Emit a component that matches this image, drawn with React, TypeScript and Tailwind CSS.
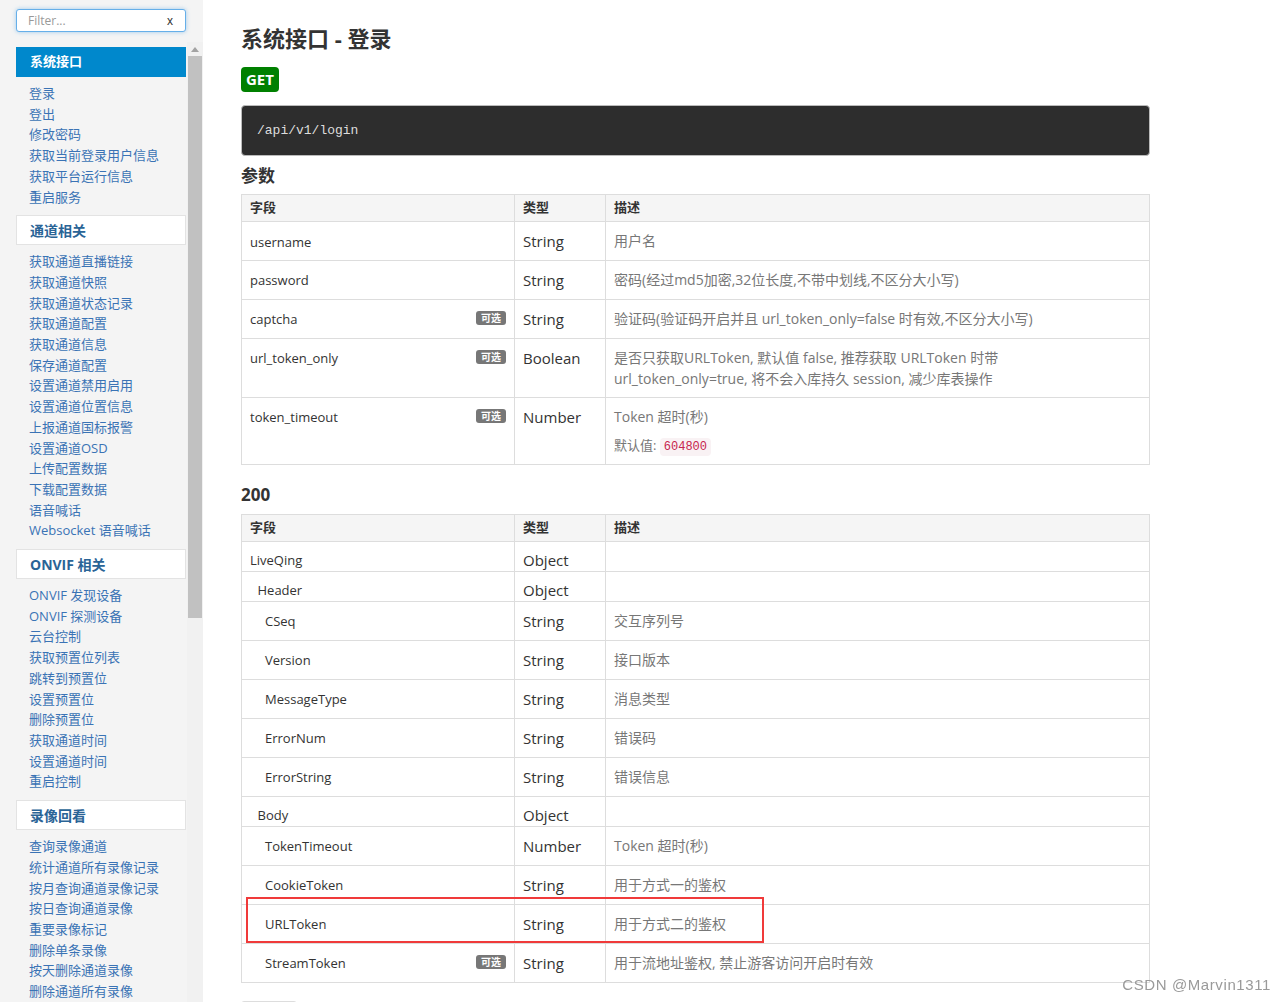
import React from "react"

const font = "font-['Open_Sans','Noto_Sans_CJK_SC',sans-serif]"

const nav = [
  { title: "系统接口", active: true, items: ["登录", "登出", "修改密码", "获取当前登录用户信息", "获取平台运行信息", "重启服务"] },
  {
    title: "通道相关",
    items: [
      "获取通道直播链接", "获取通道快照", "获取通道状态记录", "获取通道配置", "获取通道信息", "保存通道配置",
      "设置通道禁用启用", "设置通道位置信息", "上报通道国标报警", "设置通道OSD", "上传配置数据", "下载配置数据",
      "语音喊话", "Websocket 语音喊话",
    ],
  },
  {
    title: "ONVIF 相关",
    items: [
      "ONVIF 发现设备", "ONVIF 探测设备", "云台控制", "获取预置位列表", "跳转到预置位", "设置预置位", "删除预置位",
      "获取通道时间", "设置通道时间", "重启控制",
    ],
  },
  {
    title: "录像回看",
    items: ["查询录像通道", "统计通道所有录像记录", "按月查询通道录像记录", "按日查询通道录像", "重要录像标记", "删除单条录像", "按天删除通道录像", "删除通道所有录像"],
  },
]

type Row = { name: string; type: string; desc?: string; indent?: number; optional?: boolean; short?: boolean }

const resp: Row[] = [
  { name: "LiveQing", type: "Object", short: true },
  { name: "Header", type: "Object", indent: 1, short: true },
  { name: "CSeq", type: "String", indent: 2, desc: "交互序列号" },
  { name: "Version", type: "String", indent: 2, desc: "接口版本" },
  { name: "MessageType", type: "String", indent: 2, desc: "消息类型" },
  { name: "ErrorNum", type: "String", indent: 2, desc: "错误码" },
  { name: "ErrorString", type: "String", indent: 2, desc: "错误信息" },
  { name: "Body", type: "Object", indent: 1, short: true },
  { name: "TokenTimeout", type: "Number", indent: 2, desc: "Token 超时(秒)" },
  { name: "CookieToken", type: "String", indent: 2, desc: "用于方式一的鉴权" },
  { name: "URLToken", type: "String", indent: 2, desc: "用于方式二的鉴权" },
  { name: "StreamToken", type: "String", indent: 2, desc: "用于流地址鉴权, 禁止游客访问开启时有效", optional: true },
]

function Optional() {
  return (
    <span className="mt-[3px] h-[14px] rounded-[3px] bg-[#777] px-[5px] text-[10px] font-bold leading-[14px] text-white">可选</span>
  )
}

function Head() {
  return (
    <thead>
      <tr className="bg-[#f5f5f5] text-left text-[13px] font-bold text-[#333]">
        <th className="h-[27px] border border-[#ddd] px-[8px] py-0">字段</th>
        <th className="border border-[#ddd] px-[8px] py-0">类型</th>
        <th className="border border-[#ddd] px-[8px] py-0">描述</th>
      </tr>
    </thead>
  )
}

function Cols() {
  return (
    <colgroup>
      <col className="w-[273px]" />
      <col className="w-[91px]" />
      <col />
    </colgroup>
  )
}

export default function App() {
  return (
    <div className={`flex h-screen overflow-hidden bg-white text-[#333] ${font}`}>
      <aside className="flex w-[203px] shrink-0 flex-col bg-[#f4f4f4]">
        <div className="h-[42px] pt-[9px]">
          <div className="ml-[16px] flex h-[23px] w-[170px] items-center justify-between rounded-[3px] border border-[#66afe9] bg-white pl-[11px] pr-[12px] text-[12px] shadow-[0_0_4px_rgba(102,175,233,0.6)]">
            <span className="text-[#999]">Filter...</span>
            <span className="font-['Liberation_Sans',sans-serif] text-[12px] text-[#333]">x</span>
          </div>
        </div>
        <div className="flex min-h-0 flex-1">
          <div className="min-w-0 flex-1 pl-[16px] pr-[1px] pt-[5px]">
            {nav.map((s) => (
              <div key={s.title} className="mb-[8px]">
                <div
                  className={
                    s.active
                      ? "flex h-[30px] items-center border border-[#0088cc] bg-[#0088cc] pl-[13px] text-[13px] font-bold text-white"
                      : "flex h-[30px] items-center border border-[#e3e3e3] bg-white pl-[13px] text-[14px] font-bold text-[#2a6496]"
                  }
                >
                  {s.title}
                </div>
                <ul className="mt-[6px] pl-[13px]">
                  {s.items.map((it) => (
                    <li key={it} className="whitespace-nowrap text-[13px] leading-[20.7px] text-[#3a73b5]">
                      {it}
                    </li>
                  ))}
                </ul>
              </div>
            ))}
          </div>
          <div className="flex w-[16px] shrink-0 flex-col bg-[#f1f1f1]">
            <div className="flex h-[14px] items-center justify-center">
              <svg width="8" height="5" viewBox="0 0 8 5">
                <path d="M0 5 L4 0 L8 5 Z" fill="#a3a3a3" />
              </svg>
            </div>
            <div className="mx-[1px] h-[562px] bg-[#c1c1c1]" />
          </div>
        </div>
      </aside>

      <main className="min-w-0 flex-1 overflow-hidden pl-[38px]">
        <div className="w-[909px]">
          <h1 className="mt-[21px] h-[34px] text-[22px] font-bold leading-[34px] text-[#333]">系统接口 - 登录</h1>
          <div className="mt-[12px] inline-flex h-[25px] items-center rounded-[4px] bg-[#008000] px-[5px] text-[15px] font-bold text-white">
            GET
          </div>
          <div className="mt-[13px] flex h-[51px] items-center rounded-[4px] border border-[#bbb] bg-[#2d2d2d] pl-[15px] font-['Liberation_Mono',monospace] text-[13px] text-[#ddd]">
            /api/v1/login
          </div>
          <h3 className="mt-[8px] text-[17px] font-semibold leading-[24px]">参数</h3>

          <table className="mt-[6px] w-full table-fixed border-collapse">
            <Cols />
            <Head />
            <tbody className="align-top">
              <tr>
                <td className="border border-[#ddd] px-[8px] pb-[7px] pt-[9px] text-[13px] leading-[22px]">username</td>
                <td className="border border-[#ddd] px-[8px] pt-[8px] text-[15px] leading-[22px]">String</td>
                <td className="border border-[#ddd] px-[8px] pt-[8px] text-[14px] leading-[22px] text-[#777]">用户名</td>
              </tr>
              <tr>
                <td className="border border-[#ddd] px-[8px] pb-[8px] pt-[8px] text-[13px] leading-[22px]">password</td>
                <td className="border border-[#ddd] px-[8px] pt-[8px] text-[15px] leading-[22px]">String</td>
                <td className="border border-[#ddd] px-[8px] pt-[8px] text-[14px] leading-[22px] text-[#777]">
                  密码(经过md5加密,32位长度,不带中划线,不区分大小写)
                </td>
              </tr>
              <tr>
                <td className="border border-[#ddd] px-[8px] py-[8px] text-[13px] leading-[22px]">
                  <div className="flex items-start justify-between">
                    <span>captcha</span>
                    <Optional />
                  </div>
                </td>
                <td className="border border-[#ddd] px-[8px] pt-[8px] text-[15px] leading-[22px]">String</td>
                <td className="border border-[#ddd] px-[8px] pt-[8px] text-[14px] leading-[22px] text-[#777]">
                  验证码(验证码开启并且 url_token_only=false 时有效,不区分大小写)
                </td>
              </tr>
              <tr>
                <td className="border border-[#ddd] px-[8px] py-[8px] text-[13px] leading-[22px]">
                  <div className="flex items-start justify-between">
                    <span>url_token_only</span>
                    <Optional />
                  </div>
                </td>
                <td className="border border-[#ddd] px-[8px] pt-[8px] text-[15px] leading-[22px]">Boolean</td>
                <td className="border border-[#ddd] px-[8px] py-[8px] text-[14px] leading-[21px] text-[#777]">
                  是否只获取URLToken, 默认值 false, 推荐获取 URLToken 时带
                  <br />
                  url_token_only=true, 将不会入库持久 session, 减少库表操作
                </td>
              </tr>
              <tr>
                <td className="border border-[#ddd] px-[8px] py-[8px] text-[13px] leading-[22px]">
                  <div className="flex items-start justify-between">
                    <span>token_timeout</span>
                    <Optional />
                  </div>
                </td>
                <td className="border border-[#ddd] px-[8px] pt-[8px] text-[15px] leading-[22px]">Number</td>
                <td className="border border-[#ddd] px-[8px] py-[8px] text-[14px] leading-[22px] text-[#777]">
                  <p>Token 超时(秒)</p>
                  <p className="mt-[6px] h-[22px] text-[13px]">
                    默认值:{" "}
                    <code className="rounded-[4px] bg-[#f9f2f4] px-[4px] py-[2px] font-['Liberation_Mono',monospace] text-[12px] text-[#c7254e]">
                      604800
                    </code>
                  </p>
                </td>
              </tr>
            </tbody>
          </table>

          <h3 className="mt-[18px] text-[17px] font-bold leading-[24px]">200</h3>

          <div className="relative mt-[7px]">
            <table className="w-full table-fixed border-collapse">
              <Cols />
              <Head />
              <tbody className="align-top">
                {resp.map((r) => (
                  <tr key={r.name}>
                    <td
                      className={
                        (r.short ? "pb-0 pt-[7px] leading-[22px] " : "py-[8px] leading-[22px] ") +
                        "border border-[#ddd] pr-[8px] text-[13px]"
                      }
                      style={{ paddingLeft: 8 + (r.indent ?? 0) * 7.5 }}
                    >
                      <div className="flex items-start justify-between">
                        <span>{r.name}</span>
                        {r.optional && <Optional />}
                      </div>
                    </td>
                    <td className={(r.short ? "pt-[8px] leading-[21px] " : "pt-[8px] leading-[22px] ") + "border border-[#ddd] px-[8px] text-[15px]"}>
                      {r.type}
                    </td>
                    <td className="border border-[#ddd] px-[8px] pt-[8px] text-[14px] leading-[22px] text-[#777]">{r.desc}</td>
                  </tr>
                ))}
              </tbody>
            </table>
            <div className="absolute left-[5px] top-[383px] h-[46px] w-[518px] border-2 border-[#f03a3a]" />
          </div>

          <div className="mt-[18px] h-[30px] w-[56px] rounded-[3px] border border-[#ddd]" />
        </div>
      </main>

      <div className="fixed bottom-[6px] right-[15px] font-['Liberation_Sans',sans-serif] text-[15px] tracking-[0.6px] text-[#9a9a9a]">
        CSDN @Marvin1311
      </div>
    </div>
  )
}
